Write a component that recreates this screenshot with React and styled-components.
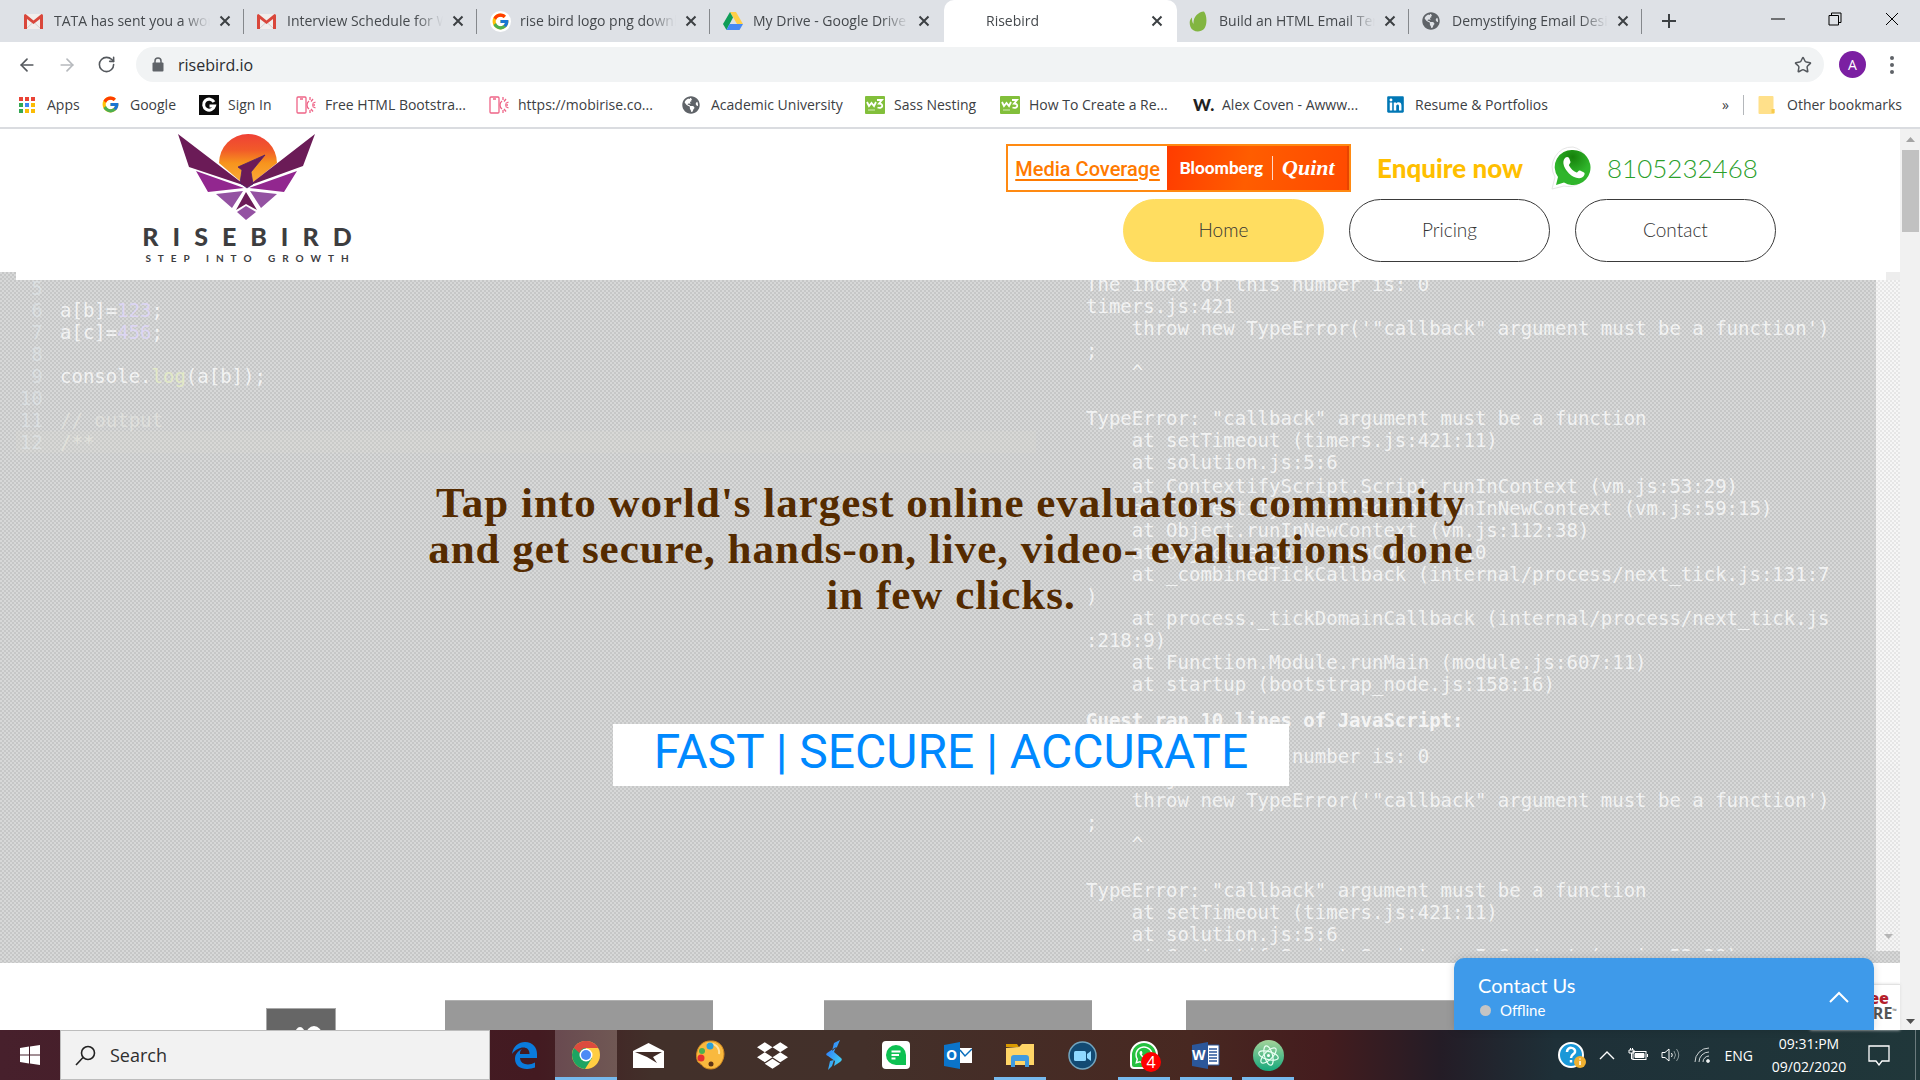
import React from "react";
import styled, { createGlobalStyle, css } from "styled-components";
import { FcGoogle } from "react-icons/fc";
import { FaDropbox, FaWhatsapp, FaLinkedin, FaGlobeAmericas } from "react-icons/fa";
import { Star, RotateCw, ArrowLeft, ArrowRight } from "lucide-react";

const ui = `"Open Sans", "Noto Sans", sans-serif`;
const brand = `Lato, "Open Sans", sans-serif`;
const mono = `"DejaVu Sans Mono", "Liberation Mono", monospace`;

const Global = createGlobalStyle`
  * { box-sizing: border-box; }
  body { margin: 0; font-family: ${ui}; }
  button, input { font: inherit; color: inherit; border: 0; padding: 0; background: none; }
  a { color: inherit; text-decoration: none; }
  svg { display: block; flex: none; }
`;

const Screen = styled.div`
  display: flex;
  flex-direction: column;
  height: 100vh;
  overflow: hidden;
  background: #fff;
`;

/* ---------- browser chrome ---------- */
const TabStrip = styled.div`
  display: flex;
  height: 42px;
  background: #dee1e6;
  padding-left: 12px;
`;
const Tab = styled.div`
  display: flex;
  align-items: center;
  flex: 0 1 233px;
  min-width: 0;
  padding: 0 14px 0 12px;
  position: relative;
  color: #45494d;
  ${(p) =>
    p.$active
      ? css`
          background: #fff;
          border-radius: 10px 10px 0 0;
        `
      : css`
          &::after {
            content: "";
            position: absolute;
            right: 1px;
            top: 9px;
            height: 25px;
            border-right: 1px solid ${p.$last ? "transparent" : "#85888c"};
          }
        `}
`;
const TabIcon = styled.span`
  display: flex;
  width: 30px;
  flex: none;
`;
const TabTitle = styled.button`
  flex: 1;
  min-width: 0;
  overflow: hidden;
  white-space: nowrap;
  text-align: left;
  font-size: 14px;
  line-height: 20px;
  -webkit-mask-image: linear-gradient(90deg, #000 82%, transparent 100%);
  mask-image: linear-gradient(90deg, #000 82%, transparent 100%);
`;
const CloseButton = styled.button`
  display: flex;
  margin-left: 9px;
`;
const NewTab = styled.button`
  display: flex;
  margin-left: 18px;
  align-items: center;
`;
const WindowControls = styled.div`
  display: flex;
  margin-left: auto;
`;
const WindowButton = styled.button`
  width: 57px;
  height: 38px;
  display: flex;
  align-items: center;
  justify-content: center;
`;

const Toolbar = styled.div`
  display: flex;
  align-items: center;
  height: 45px;
  padding: 0 26px 0 17px;
  color: #54585d;
`;
const ToolButton = styled.button`
  display: flex;
  margin-right: 20px;
  color: ${(p) => (p.$muted ? "#b6b9bd" : "#54585d")};
`;
const Omnibox = styled.label`
  display: flex;
  align-items: center;
  flex: 1;
  height: 35px;
  border-radius: 18px;
  padding: 0 12px 0 16px;
  background: #f1f3f4;
`;
const UrlInput = styled.input`
  flex: 1;
  margin-left: 14px;
  font-size: 16px;
  color: #2b2d30;
  outline: none;
`;
const Avatar = styled.button`
  width: 27px;
  height: 27px;
  margin: 0 24px 0 15px;
  border-radius: 50%;
  background: #7b1fa2;
  color: #fff;
  font-size: 14px;
`;

const Bookmarks = styled.nav`
  display: flex;
  align-items: center;
  height: 42px;
  padding: 0 18px 5px;
  border-bottom: 2px solid #dadce0;
  font-size: 14px;
  color: #3c4043;
`;
const Bookmark = styled.a`
  display: flex;
  align-items: center;
  flex: 0 1 ${(p) => p.$w}px;
  white-space: nowrap;
`;
const BookmarkIcon = styled.span`
  display: flex;
  width: 29px;
  flex: none;
  svg { min-width: 18px; }
`;
const BookmarkEnd = styled.div`
  display: flex;
  align-items: center;
  margin-left: auto;
  gap: 14px;
`;
const Divider = styled.span`
  height: 20px;
  border-left: 1px solid #b4b7bb;
`;

/* ---------- web page ---------- */
const Viewport = styled.div`
  display: flex;
  flex: 1;
  min-height: 0;
  position: relative;
`;
const Page = styled.div`
  flex: 1;
  min-width: 0;
  overflow: hidden;
`;
const ScrollBar = styled.div`
  width: 20px;
  background: #f1f1f1;
  display: flex;
  flex-direction: column;
  align-items: center;
  justify-content: space-between;
  padding: 8px 0 6px;
`;
const ScrollThumb = styled.div`
  width: 17px;
  height: 82px;
  margin: 8px 0 auto;
  background: #c1c1c1;
`;
const Header = styled.header`
  display: flex;
  justify-content: space-between;
  height: 143px;
  padding: 4px 124px 0 139px;
  background: #fff;
`;
const Brand = styled.a`
  display: flex;
  flex-direction: column;
  align-items: center;
  width: 216px;
  color: #3d3d3f;
  font-family: Lato, sans-serif;
`;
const BrandName = styled.span`
  margin: 2px 0;
  padding-left: 14px;
  font-size: 25px;
  line-height: 26px;
  font-weight: 900;
  letter-spacing: 14px;
  white-space: nowrap;
`;
const BrandLine = styled.span`
  padding-left: 7px;
  font-size: 10px;
  line-height: 14px;
  font-weight: 700;
  letter-spacing: 7px;
  white-space: nowrap;
`;
const HeaderRight = styled.div`
  display: flex;
  flex-direction: column;
  align-items: flex-end;
`;
const ContactRow = styled.div`
  display: flex;
  align-items: center;
  height: 66px;
  padding: 3px 19px 0 0;
`;
const MediaBox = styled.div`
  display: flex;
  height: 48px;
  border: 2px solid #ff8a12;
`;
const MediaLink = styled.a`
  width: 159px;
  text-align: center;
  font: 500 20px/46px Roboto, sans-serif;
  color: #ff7a00;
  text-decoration: underline;
  text-underline-offset: 3px;
  white-space: nowrap;
`;
const Press = styled.a`
  display: flex;
  align-items: center;
  justify-content: center;
  gap: 9px;
  width: 182px;
  background: linear-gradient(100deg, #ff3c00, #ff5d00 45%, #ff4a00);
  color: #fff;
  font: 900 17px/24px Lato, sans-serif;
  border-right: 2px solid #e84400;
  em {
    padding-left: 9px;
    border-left: 1px solid #ffd9c8;
    font: italic 700 22px/24px "Liberation Serif", serif;
  }
`;
const Enquire = styled.a`
  margin: 0 28px 0 26px;
  font: 900 26px/32px Lato, sans-serif;
  color: #ffbf00;
  white-space: nowrap;
`;
const Phone = styled.a`
  margin-left: 14px;
  width: 150px;
  font: 300 26px/32px Lato, sans-serif;
  color: #2ba02b;
`;
const MainNav = styled.nav`
  display: flex;
  gap: 25px;
`;
const NavLink = styled.a`
  width: 201px;
  height: 63px;
  border-radius: 32px;
  border: 1px solid ${(p) => (p.$active ? "#ffdd60" : "#3a3a3a")};
  background: ${(p) => (p.$active ? "#ffdd60" : "#fff")};
  color: #333;
  text-align: center;
  font: 300 19px/60px ${brand};
`;

const Hero = styled.section`
  position: relative;
  height: 691px;
  padding: 0 0 0 16px;
  background: repeating-conic-gradient(#c6c7c7 0 25%, #d7d8d8 0 50%) 0 0 / 4px 4px;
`;
const HeroLip = styled.div`
  height: 8px;
  border-right: 14px solid #ededed;
  background: #fff;
`;
const CodeScene = styled.div`
  display: flex;
  height: 671px;
  overflow: hidden;
  font: 19px/22px ${mono};
  color: rgba(255, 255, 255, 0.74);
`;
const Editor = styled.div`
  width: 1020px;
  flex: none;
  margin-top: -3px;
`;
const EditorLine = styled.div`
  display: grid;
  grid-template-columns: 27px 1fr;
  column-gap: 17px;
  height: 22px;
  white-space: pre;
  background: ${(p) => (p.$current ? "rgba(222,222,208,0.2)" : "none")};
  span:first-child {
    text-align: right;
    color: rgba(228, 236, 240, 0.5);
  }
`;
const Tint = styled.i`
  font-style: normal;
  color: ${(p) => p.$c};
`;
const Console = styled.pre`
  flex: 1;
  margin: -7px 0 0;
  padding-left: 50px;
  font: inherit;
  b { color: rgba(255, 255, 255, 0.8); }
`;
const ConsoleLine = styled.div`
  min-height: 22px;
  margin-top: ${(p) => p.$gap || 0}px;
`;
const SceneScroll = styled.div`
  width: 24px;
  background: repeating-conic-gradient(#e6e6e6 0 25%, #f6f6f6 0 50%) 0 0 / 4px 4px;
  display: flex;
  align-items: flex-end;
  justify-content: center;
  padding-bottom: 12px;
  opacity: 0.99;
`;
const HeroCopy = styled.div`
  position: absolute;
  inset: 208px 0 auto 2px;
  display: flex;
  flex-direction: column;
  align-items: center;
`;
const Headline = styled.h1`
  margin: 0;
  max-width: 1120px;
  text-align: center;
  font: bold 43px/46px "Liberation Serif", serif;
  letter-spacing: 1px;
  color: #552b00;
`;
const Motto = styled.p`
  margin: 106px 0 0;
  width: 676px;
  height: 62px;
  background: #fff;
  text-align: center;
  font: 400 48px/56px Roboto, sans-serif;
  color: #0089ff;
  white-space: nowrap;
`;

const Stats = styled.section`
  display: flex;
  align-items: flex-start;
  padding: 37px 0 0 266px;
`;
const StatIcon = styled.div`
  width: 70px;
  height: 60px;
  margin: 8px 109px 0 0;
  border: 1px solid #a8a8a8;
  background: #666;
`;
const StatBlock = styled.div`
  width: 268px;
  height: 68px;
  margin-right: ${(p) => p.$gap}px;
  border-top: 1px solid #b0b0b0;
  background: #999;
`;
const Seal = styled.div`
  position: absolute;
  right: 20px;
  bottom: 0;
  width: 90px;
  height: 46px;
  padding: 6px 3px 0 0;
  background: #fff;
  border-top: 1px solid #e2e2e2;
  box-shadow: 0 0 3px #ddd;
  text-align: right;
  font: 700 16px/15px "Open Sans", sans-serif;
  color: #555;
  b { display: block; padding-right: 8px; color: #b5202c; }
  sup { font-size: 6px; line-height: 6px; }
`;
const Chat = styled.button`
  position: absolute;
  right: 46px;
  bottom: 0;
  display: flex;
  align-items: center;
  justify-content: space-between;
  width: 420px;
  height: 72px;
  padding: 6px 25px 0 24px;
  border-radius: 10px 10px 0 0;
  background: #3e9aea;
  box-shadow: 0 0 8px rgba(0, 0, 0, 0.15);
  color: #fff;
  text-align: left;
  font-family: ${brand};
`;
const ChatTitle = styled.span`
  display: block;
  font-size: 20px;
  line-height: 26px;
`;
const ChatStatus = styled.span`
  display: flex;
  align-items: center;
  gap: 9px;
  font-size: 15px;
  line-height: 24px;
  &::before {
    content: "";
    width: 11px;
    height: 11px;
    margin-left: 2px;
    border-radius: 50%;
    background: #c4c4c4;
  }
`;

/* ---------- taskbar ---------- */
const TaskBar = styled.footer`
  display: flex;
  height: 50px;
  background: linear-gradient(90deg, #47202c 0, #431a21 28%, #42302a 34%, #43302a 45%, #482821 62%, #441c1e 69%, #241c26 75%, #1e3038 81%, #20373a 100%);
  color: #fff;
`;
const StartButton = styled.button`
  width: 60px;
  display: flex;
  align-items: center;
  justify-content: center;
`;
const SearchBox = styled.label`
  display: flex;
  align-items: center;
  gap: 14px;
  width: 430px;
  padding-left: 14px;
  background: #f2f2f2;
  border: 1px solid #bdbdbd;
  color: #222;
`;
const SearchInput = styled.input`
  width: 300px;
  font-size: 18px;
  outline: none;
  &::placeholder { color: #2e2e2e; opacity: 1; }
`;
const TaskApps = styled.div`
  display: flex;
  padding-left: 3px;
`;
const TaskButton = styled.button`
  position: relative;
  display: flex;
  align-items: center;
  justify-content: center;
  width: 62px;
  ${(p) => p.$active && "background: linear-gradient(90deg, #694a50, #705854);"}
  ${(p) =>
    p.$open &&
    css`
      &::after {
        content: "";
        position: absolute;
        left: ${p.$active ? 0 : 5}px;
        right: ${p.$active ? 0 : 5}px;
        bottom: 0;
        height: 3px;
        background: #76b9ed;
      }
    `}
`;
const Badge = styled.span`
  position: absolute;
  left: 28px;
  top: 22px;
  width: 20px;
  height: 20px;
  border-radius: 50%;
  background: #f00;
  font-size: 16px;
  line-height: 20px;
`;
const Tray = styled.div`
  display: flex;
  align-items: center;
  margin-left: auto;
  gap: 13px;
  padding-right: 4px;
  font-size: 14px;
`;
const Clock = styled.time`
  width: 86px;
  margin-right: 3px;
  text-align: center;
  line-height: 23px;
`;
const PeekEdge = styled.span`
  align-self: stretch;
  margin-left: 12px;
  border-left: 1px solid #6b7a7d;
`;

/* ---------- icons ---------- */
const X = () => (
  <svg width="12" height="12" viewBox="0 0 12 12" stroke="#3c4043" strokeWidth="2"><path d="M1.5 1.5l9 9M10.5 1.5l-9 9" /></svg>
);
const Gmail = () => (
  <svg width="19" height="15" viewBox="0 0 19 15"><path d="M1 0h17v15H1z" fill="#f1eeec" /><path d="M3 14l6.500-6 6.500 6" fill="none" stroke="#d5d0ce" /><path d="M0 15V1.500Q0 0 1.500 0L9.500 6.500 17.500 0Q19 0 19 1.500V15H16V5L9.500 10 3 5V15z" fill="#d9473b" /></svg>
);
const GoogleTab = styled.span`
  display: flex;
  padding: 1px;
  border-radius: 50%;
  background: #fff;
`;
const Drive = () => (
  <svg width="20" height="18" viewBox="0 0 20 18"><path d="M7 0h6l7 12h-6z" fill="#ffcf48" /><path d="M7 0l3 5.500L3.500 18 0 12z" fill="#0f9d58" /><path d="M6.500 12H20l-3.500 6h-13z" fill="#4688f4" /></svg>
);
const Envato = () => (
  <svg width="19" height="21" viewBox="0 0 19 21"><path d="M15 .5C18 4 18.500 14 15 18 11 22 3.500 21 1.500 16-.2 11.500 1 8 3 6.500 3 9 3 11 4.500 13 4 6 9 1 15 .5z" fill="#82b541" /></svg>
);
const Globe = () => <FaGlobeAmericas size={18} color="#5f6368" />;
const Apps = () => (
  <svg width="18" height="18" viewBox="0 0 18 18">
    {["#ea4335", "#ea4335", "#ea4335", "#34a853", "#4285f4", "#fbbc05", "#34a853", "#fbbc05", "#fbbc05"].map((c, i) => (
      <rect key={i} x={1 + (i % 3) * 6} y={1 + Math.floor(i / 3) * 6} width="4" height="4" fill={c} />
    ))}
  </svg>
);
const GLogo = () => (
  <svg width="20" height="20" viewBox="0 0 20 20"><rect width="20" height="20" fill="#0b0b0b" /><path d="M15 7A5.500 5.500 0 1 0 15.500 11H10.500" fill="none" stroke="#fff" strokeWidth="3" /></svg>
);
const Mobirise = () => (
  <svg width="20" height="18" viewBox="0 0 20 18" fill="none" stroke="#ee6487" strokeWidth="1.300"><rect x="1" y="1" width="9" height="16" rx="1" /><path d="M4 3h3M13 5a5 5 0 0 0 0 8M14 1v3M17 3l-2 2.500M19.500 6l-3 1.500M19.500 12l-3-1.500M17 15.500l-2-2.500M14 17v-3M16 9h3" /></svg>
);
const W3 = () => (
  <svg width="20" height="18" viewBox="0 0 20 18"><rect width="20" height="18" rx="1" fill="#82bf3b" /><path d="M2 6l2 4 2.500-3L9 10l2-4M12 4h5l-3 3.500c5 0 4 6-1.500 4" fill="none" stroke="#fff" strokeWidth="1.800" /><path d="M3 14h7" stroke="#d2ebb5" /></svg>
);
const Folder = () => (
  <svg width="17" height="18" viewBox="0 0 17 18"><path d="M1 0h13q1 0 1 1v12h1v4q0 1-1 1H1q-1 0-1-1V1q0-1 1-1z" fill="#ffe08a" /><path d="M13 13h3v4h-3z" fill="#f7cb4d" /></svg>
);
const BigW = styled.b`
  font: 900 17px/18px Lato, sans-serif;
  color: #222;
`;

const BirdMark = () => (
  <svg width="140" height="88" viewBox="0 0 140 88" aria-hidden="true">
    <defs><linearGradient id="sun" x2="0" y2="1"><stop offset="0" stopColor="#ef4136" /><stop offset=".3" stopColor="#f15a29" /><stop offset=".55" stopColor="#f7941d" /><stop offset="1" stopColor="#fbb040" /></linearGradient></defs>
    <path d="M42 30a29 29 0 0 1 58 0L70 54z" fill="url(#sun)" />
    <path d="M1 1L69 53 12 34zM138 1L71 53 126 33z" fill="#6b1b57" />
    <path d="M61 34L88 22 74 39l2 12-6 4-7-5 2-13z" fill="#6b1b57" stroke="#4d1f6e" strokeWidth=".8" />
    <path d="M19 38L67 55 31 59zM120 38L72 55 107 59z" fill="#92278f" />
    <path d="M39 61L66 58 55 75zM100 61L73 58 84 75z" fill="#9452a2" />
    <path d="M69 59L80 77 69 71 59 77z" fill="#6b1b57" />
    <path d="M69 73L79 79 69 87 60 79z" fill="#9452a2" />
  </svg>
);
const WhatsAppBig = () => (
  <svg width="42" height="44" viewBox="0 0 42 44"><defs><radialGradient id="wa" cy=".2"><stop offset="0" stopColor="#16800a" /><stop offset="1" stopColor="#2fb52b" /></radialGradient></defs><path d="M22 1A20 20 0 0 0 4 31L1 43l12-3A20 20 0 1 0 22 1z" fill="#fff" stroke="#e6e6e6" /><path d="M22 4A17 17 0 0 0 7 31L5 39l8-2.500A17.500 17.500 0 1 0 22 4z" fill="url(#wa)" /><path d="M14 12c2-2 4-1 4.500 1l1 3c.3 1-2 2.500-1.500 3.500 2 3.500 4 5.500 7.500 7 1 .4 2-2.500 3.500-2l4 2c1.500 1 0 4-2 5-4 2-10-1-13-4-4-4-8-11-4-15.500z" fill="#fff" /></svg>
);
const Edge = () => (
  <svg width="27" height="27" viewBox="0 0 27 27"><path d="M1 12C2 4 8 0 14 0c8 0 12 6 12 12v4H9c.5 7 9 8 15 4.500v5C15 29 4 26.500 4 17 4 12 7 9 11 7c-2 2-2 3-2 5h9.500C18.500 3 7 4 1 12z" fill="#0a7bdc" /></svg>
);
const Chrome = () => (
  <svg width="28" height="28" viewBox="0 0 28 28"><circle cx="14" cy="14" r="14" fill="#ffcd42" /><path d="M14 14L1.900 7A14 14 0 0 1 26.100 7H14z" fill="#dc4b3e" /><path d="M1.900 7A14 14 0 0 0 13 28l7-11-6-3z" fill="#1da462" /><path d="M2 7l6 10 6-3V7z" fill="#1da462" /><path d="M1.900 7A14 14 0 0 1 26.100 7H14A7 7 0 0 0 7.500 12z" fill="#dc4b3e" /><circle cx="14" cy="14" r="6.500" fill="#fff" /><circle cx="14" cy="14" r="5" fill="#4c8bf5" /></svg>
);
const Mail = () => (
  <svg width="31" height="25" viewBox="0 0 31 25"><path d="M0 8L15.500 0 31 8v17H0z" fill="#fff" /><path d="M2 9h27L20 14l4 6-10-6z" fill="#402b26" /></svg>
);
const Palette = () => (
  <svg width="30" height="30" viewBox="0 0 30 30"><path d="M15 1c9-1 14 6 14 13s-5 15-13 15S8 25 3 22C-1 15 3 1 15 1z" fill="#f9b93e" stroke="#d08822" /><path d="M12 4c8-2 13 4 12 10" stroke="#ffe3a0" strokeWidth="2" fill="none" /><circle cx="15" cy="6" r="3.500" fill="#2aa0d8" /><circle cx="7" cy="11" r="3" fill="#4cb050" /><circle cx="6" cy="18" r="3.500" fill="#e53030" /><circle cx="16" cy="24" r="2.500" fill="#5c3317" /></svg>
);
const Bolt = () => (
  <svg width="17" height="30" viewBox="0 0 17 30"><defs><linearGradient id="bolt" x2="1" y2="1"><stop offset="0" stopColor="#2c6bff" /><stop offset="1" stopColor="#45e0ef" /></linearGradient></defs><path d="M14 0L8 3 6 11l5-4zM1 13L10 7l-2 5 7 6q2 2-1 4l-6 4 1-5-7-5q-3-1-1-3zM2 30l2-9 4-1-2 6z" fill="url(#bolt)" /></svg>
);
const GreenChat = () => (
  <svg width="28" height="28" viewBox="0 0 28 28"><rect width="28" height="28" rx="4" fill="#fff" /><path d="M14 4a10 10 0 1 0 0 20h10V14A10 10 0 0 0 14 4z" fill="#0dc152" /><path d="M9.500 10.500h9M9.500 14h7.500M9.500 17.500h4" stroke="#fff" strokeWidth="2" /></svg>
);
const GlyphText = styled.span`
  position: absolute;
  left: ${(p) => p.$x}px;
  top: 16px;
  font-size: 14px;
  line-height: 18px;
  font-weight: 700;
`;
const Outlook = () => (
  <><svg width="28" height="27" viewBox="0 0 28 27"><path d="M14 6h14v15H14z" fill="#fff" /><path d="M16 8l5 6 7-7" fill="none" stroke="#0a6ebd" strokeWidth="1.500" /><path d="M0 3l16-3v27L0 24z" fill="#0b74ca" /></svg><GlyphText $x={19}>O</GlyphText></>
);
const Word = () => (
  <><svg width="28" height="27" viewBox="0 0 28 27"><path d="M14 3h13v20H14z" fill="#fff" stroke="#2b579a" /><path d="M17 7h8M17 10h8M17 13h8M17 16h8M17 19h8" stroke="#2b579a" strokeWidth="1.500" /><path d="M0 3l16-3v27L0 24z" fill="#2b579a" /></svg><GlyphText $x={17}>W</GlyphText></>
);
const Explorer = () => (
  <svg width="28" height="24" viewBox="0 0 28 24"><path d="M0 1h11l2 3H0z" fill="#d99a00" /><path d="M0 5l13-1 3-3h12v21H0z" fill="#ffd567" /><path d="M5 24V15q0-3 3-3h12q3 0 3 3v9h-4v-6H9v6z" fill="#3f9be0" /></svg>
);
const Zoom = () => (
  <svg width="29" height="29" viewBox="0 0 29 29"><circle cx="14.500" cy="14.500" r="13.500" fill="#124a73" stroke="#72a5bf" strokeWidth="1.500" /><rect x="6" y="10" width="12" height="10" rx="1.500" fill="#8fd8ff" /><path d="M19 13l4-3v10l-4-3z" fill="#8fd8ff" /></svg>
);
const WaSmall = styled.span`
  display: flex;
  align-items: center;
  justify-content: center;
  width: 28px;
  height: 28px;
  border: 2px solid #fff;
  border-radius: 14px 14px 14px 4px;
  background: #25c13f;
`;
const Atom = () => (
  <svg width="31" height="31" viewBox="0 0 31 31"><defs><linearGradient id="atom" x2="0" y2="1"><stop offset="0" stopColor="#a4d49a" /><stop offset="1" stopColor="#16a87c" /></linearGradient></defs><circle cx="15.500" cy="15.500" r="15.500" fill="url(#atom)" /><g fill="none" stroke="#e8fff2" strokeWidth="1.200"><ellipse cx="15.500" cy="15.500" rx="10" ry="4" transform="rotate(15 15.500 15.500)" /><ellipse cx="15.500" cy="15.500" rx="10" ry="4" transform="rotate(75 15.500 15.500)" /><ellipse cx="15.500" cy="15.500" rx="10" ry="4" transform="rotate(135 15.500 15.500)" /></g><circle cx="15.500" cy="15.500" r="1.500" fill="#fff" /></svg>
);
const Arrow = ({ up, color = "#505050" }) => (
  <svg width="9" height="5" viewBox="0 0 9 5"><path d={up ? "M0 5L4.500 0 9 5z" : "M0 0h9L4.500 5z"} fill={color} /></svg>
);

/* ---------- data ---------- */
const tabs = [
  { title: "TATA has sent you a work", icon: <Gmail /> },
  { title: "Interview Schedule for Web", icon: <Gmail /> },
  { title: "rise bird logo png download", icon: <GoogleTab><FcGoogle size={19} /></GoogleTab> },
  { title: "My Drive - Google Drive", icon: <Drive />, last: true },
  { title: "Risebird", active: true },
  { title: "Build an HTML Email Template", icon: <Envato /> },
  { title: "Demystifying Email Design", icon: <Globe /> },
];
const bookmarks = [
  ["Apps", 83, <Apps />],
  ["Google", 98, <FcGoogle size={19} />],
  ["Sign In", 97, <GLogo />],
  ["Free HTML Bootstra...", 193, <Mobirise />],
  ["https://mobirise.co...", 193, <Mobirise />],
  ["Academic University", 183, <Globe />],
  ["Sass Nesting", 135, <W3 />],
  ["How To Create a Re...", 193, <W3 />],
  ["Alex Coven - Awww...", 193, <BigW>W.</BigW>],
  ["Resume & Portfolios", 170, <FaLinkedin size={19} color="#0077b5" />],
];
const white = "inherit";
const editor = [
  ["5", []],
  ["6", [["a[b]=", white], ["123", "rgba(225,215,255,.75)"], [";", white]]],
  ["7", [["a[c]=", white], ["456", "rgba(225,215,255,.75)"], [";", white]]],
  ["8", []],
  ["9", [["console.", white], ["log", "rgba(232,240,196,.8)"], ["(a[b]);", white]]],
  ["10", []],
  ["11", [["// output", "rgba(232,232,226,.6)"]]],
  ["12", [["/**", "rgba(236,236,226,.6)"]]],
];
const trace = [
  "timers.js:421",
  "    throw new TypeError('\"callback\" argument must be a function')",
  ";",
  "    ^",
  "",
  "TypeError: \"callback\" argument must be a function",
  "    at setTimeout (timers.js:421:11)",
  "    at solution.js:5:6",
];
const stack = [
  "    at ContextifyScript.Script.runInContext (vm.js:53:29)",
  "    at ContextifyScript.Script.runInNewContext (vm.js:59:15)",
  "    at Object.runInNewContext (vm.js:112:38)",
  "    at Object.exports.runCode:18:10",
  "    at _combinedTickCallback (internal/process/next_tick.js:131:7",
  ")",
  "    at process._tickDomainCallback (internal/process/next_tick.js",
  ":218:9)",
  "    at Function.Module.runMain (module.js:607:11)",
  "    at startup (bootstrap_node.js:158:16)",
];
const apps = [
  { name: "Edge", icon: <Edge /> },
  { name: "Chrome", icon: <Chrome />, active: true, open: true },
  { name: "Mail", icon: <Mail /> },
  { name: "Paint", icon: <Palette /> },
  { name: "Dropbox", icon: <FaDropbox size={31} /> },
  { name: "Bolt", icon: <Bolt /> },
  { name: "Chat", icon: <GreenChat /> },
  { name: "Outlook", icon: <Outlook /> },
  { name: "Explorer", icon: <Explorer />, open: true },
  { name: "Zoom", icon: <Zoom /> },
  { name: "WhatsApp", icon: <><WaSmall><FaWhatsapp size={20} /></WaSmall><Badge>4</Badge></>, open: true },
  { name: "Word", icon: <Word />, open: true },
  { name: "Atom", icon: <Atom />, open: true },
];

const BrowserChrome = () => (
  <>
    <TabStrip>
      {tabs.map((t) => (
        <Tab key={t.title} $active={t.active} $last={t.last}>
          <TabIcon>{t.icon}</TabIcon>
          <TabTitle>{t.title}</TabTitle>
          <CloseButton aria-label="Close tab"><X /></CloseButton>
        </Tab>
      ))}
      <NewTab aria-label="New tab"><svg width="16" height="16" stroke="#3c4043" strokeWidth="2"><path d="M8 1v14M1 8h14" /></svg></NewTab>
      <WindowControls>
        <WindowButton aria-label="Minimize"><svg width="14" height="2"><path d="M0 1h14" stroke="#000" /></svg></WindowButton>
        <WindowButton aria-label="Restore"><svg width="14" height="14" fill="none" stroke="#000"><path d="M1 3.500h9.500v9.500H1zM3.500 3.500V1H13v9.500h-2.500" /></svg></WindowButton>
        <WindowButton aria-label="Close"><svg width="14" height="14" stroke="#000"><path d="M1 1l12 12M13 1L1 13" /></svg></WindowButton>
      </WindowControls>
    </TabStrip>
    <Toolbar>
      <ToolButton aria-label="Back"><ArrowLeft size={20} /></ToolButton>
      <ToolButton aria-label="Forward" $muted><ArrowRight size={20} /></ToolButton>
      <ToolButton aria-label="Reload"><RotateCw size={19} /></ToolButton>
      <Omnibox>
        <svg width="12" height="15" viewBox="0 0 12 15"><path d="M3 6V4a3 3 0 0 1 6 0v2" fill="none" stroke="#5f6368" strokeWidth="1.500" /><rect x=".5" y="5.500" width="11" height="9" rx="1" fill="#5f6368" /></svg>
        <UrlInput aria-label="Address" defaultValue="risebird.io" />
        <Star size={18} />
      </Omnibox>
      <Avatar>A</Avatar>
      <svg width="4" height="18" fill="#5f6368"><circle cx="2" cy="2" r="2" /><circle cx="2" cy="9" r="2" /><circle cx="2" cy="16" r="2" /></svg>
    </Toolbar>
    <Bookmarks>
      {bookmarks.map(([label, w, icon]) => (
        <Bookmark key={label} href="#" $w={w}><BookmarkIcon>{icon}</BookmarkIcon>{label}</Bookmark>
      ))}
      <BookmarkEnd>
        <span>»</span>
        <Divider />
        <Bookmark href="#" $w={145}><BookmarkIcon><Folder /></BookmarkIcon>Other bookmarks</Bookmark>
      </BookmarkEnd>
    </Bookmarks>
  </>
);

const SiteHeader = () => (
  <Header>
    <Brand href="#">
      <BirdMark />
      <BrandName>RISEBIRD</BrandName>
      <BrandLine>STEP INTO GROWTH</BrandLine>
    </Brand>
    <HeaderRight>
      <ContactRow>
        <MediaBox>
          <MediaLink href="#">Media Coverage</MediaLink>
          <Press href="#">Bloomberg<em>Quint</em></Press>
        </MediaBox>
        <Enquire href="#">Enquire now</Enquire>
        <WhatsAppBig />
        <Phone href="#">8105232468</Phone>
      </ContactRow>
      <MainNav>
        <NavLink href="#" $active>Home</NavLink>
        <NavLink href="#">Pricing</NavLink>
        <NavLink href="#">Contact</NavLink>
      </MainNav>
    </HeaderRight>
  </Header>
);

const Lines = ({ items, gap }) =>
  items.map((l, i) => (
    <ConsoleLine key={i} $gap={l === "" ? 2 : i === 0 ? gap : 0}>{l}</ConsoleLine>
  ));

const SiteHero = () => (
  <Hero>
    <HeroLip />
    <CodeScene>
      <Editor>
        {editor.map(([n, parts]) => (
          <EditorLine key={n} $current={n === "12"}>
            <span>{n}</span>
            <span>{parts.map(([s, c]) => <Tint key={s} $c={c}>{s}</Tint>)}</span>
          </EditorLine>
        ))}
      </Editor>
      <Console>
        <ConsoleLine>The index of this number is: 0</ConsoleLine>
        <Lines items={trace} />
        <Lines items={stack} gap={2} />
        <ConsoleLine $gap={14}><b>Guest ran 10 lines of JavaScript:</b></ConsoleLine>
        <ConsoleLine $gap={14}>The index of this number is: 0</ConsoleLine>
        <Lines items={trace} />
        <Lines items={stack.slice(0, 1)} />
      </Console>
      <SceneScroll><Arrow color="#b5b5b5" /></SceneScroll>
    </CodeScene>
    <HeroCopy>
      <Headline>
        Tap into world's largest online evaluators community<br />
        and get secure, hands-on, live, video- evaluations done<br />
        in few clicks.
      </Headline>
      <Motto>FAST | SECURE | ACCURATE</Motto>
    </HeroCopy>
  </Hero>
);

export default function App() {
  return (
    <Screen>
      <Global />
      <BrowserChrome />
      <Viewport>
        <Page>
          <SiteHeader />
          <SiteHero />
          <Stats>
            <StatIcon><svg width="68" height="40" fill="#fff"><ellipse cx="33" cy="26" rx="5" ry="8" /><ellipse cx="47" cy="26" rx="8" ry="9" /></svg></StatIcon>
            <StatBlock $gap={111} />
            <StatBlock $gap={94} />
            <StatBlock $gap={0} />
          </Stats>
        </Page>
        <ScrollBar><Arrow up color="#a3a3a3" /><ScrollThumb /><Arrow /></ScrollBar>
        <Seal><b>McAfee</b>SECURE<sup>™</sup></Seal>
        <Chat>
          <span><ChatTitle>Contact Us</ChatTitle><ChatStatus>Offline</ChatStatus></span>
          <svg width="20" height="12" fill="none" stroke="#fff" strokeWidth="2"><path d="M1 11l9-9 9 9" /></svg>
        </Chat>
      </Viewport>
      <TaskBar>
        <StartButton aria-label="Start"><svg width="20" height="20" viewBox="0 0 20 20" fill="#fff"><path d="M0 3l9-1.400V9.500H0zM10 1.400L20 0v9.500H10zM0 10.500h9v7.900L0 17zM10 10.500h10V20l-10-1.500z" /></svg></StartButton>
        <SearchBox>
          <svg width="21" height="21" viewBox="0 0 21 21" fill="none" stroke="#222" strokeWidth="1.600"><circle cx="13" cy="8" r="6.500" /><path d="M8 12.500L1 20" /></svg>
          <SearchInput aria-label="Search" placeholder="Search" />
        </SearchBox>
        <TaskApps>
          {apps.map((a) => (
            <TaskButton key={a.name} aria-label={a.name} $active={a.active} $open={a.open}>{a.icon}</TaskButton>
          ))}
        </TaskApps>
        <Tray>
          <svg width="28" height="28" viewBox="0 0 28 28"><circle cx="13" cy="14" r="12" fill="#1a98d8" stroke="#fff" strokeWidth="2" /><path d="M9 11c0-6 9-5 8 0-.5 2.500-4 2.500-4 6M13 19v2.500" fill="none" stroke="#fff" strokeWidth="2.500" /><circle cx="22" cy="21" r="6" fill="#efb030" /><path d="M22 20v4M22 17.500v1" stroke="#fff" strokeWidth="1.500" /></svg>
          <svg width="16" height="9" fill="none" stroke="#fff" strokeWidth="1.400"><path d="M1 8l7-7 7 7" /></svg>
          <svg width="20" height="14" viewBox="0 0 20 14" fill="none" stroke="#fff"><rect x="5" y="3.500" width="13" height="8" /><path d="M7 5.500h9v4H7z" fill="#fff" /><path d="M19.500 6v3M1 2h5v3H1zM2.500 0v2M4.500 0v2M3.500 5v6H5" /></svg>
          <svg width="20" height="16" viewBox="0 0 20 16" fill="none" stroke="#fff"><path d="M1 5.500h3L8 2v12l-4-3.500H1z" /><path d="M10.500 6q1.500 2 0 4" /><path d="M13 4q3 4 0 8M15.500 2q4.500 6 0 12" stroke="#8c999b" /></svg>
          <svg width="18" height="16" viewBox="0 0 18 16" fill="none" stroke="#cdd4d5"><path d="M1 15A14 14 0 0 1 15 1M5 15A10 10 0 0 1 15 5M9 15a6 6 0 0 1 6-6" /><circle cx="14" cy="14" r="1.500" fill="#fff" /></svg>
          <span>ENG</span>
          <Clock>09:31:PM<br />09/02/2020</Clock>
          <svg width="22" height="21" viewBox="0 0 22 21" fill="none" stroke="#fff" strokeWidth="1.300"><path d="M1 1h20v15h-7l-3 4-3-4H1z" /></svg>
          <PeekEdge />
        </Tray>
      </TaskBar>
    </Screen>
  );
}
